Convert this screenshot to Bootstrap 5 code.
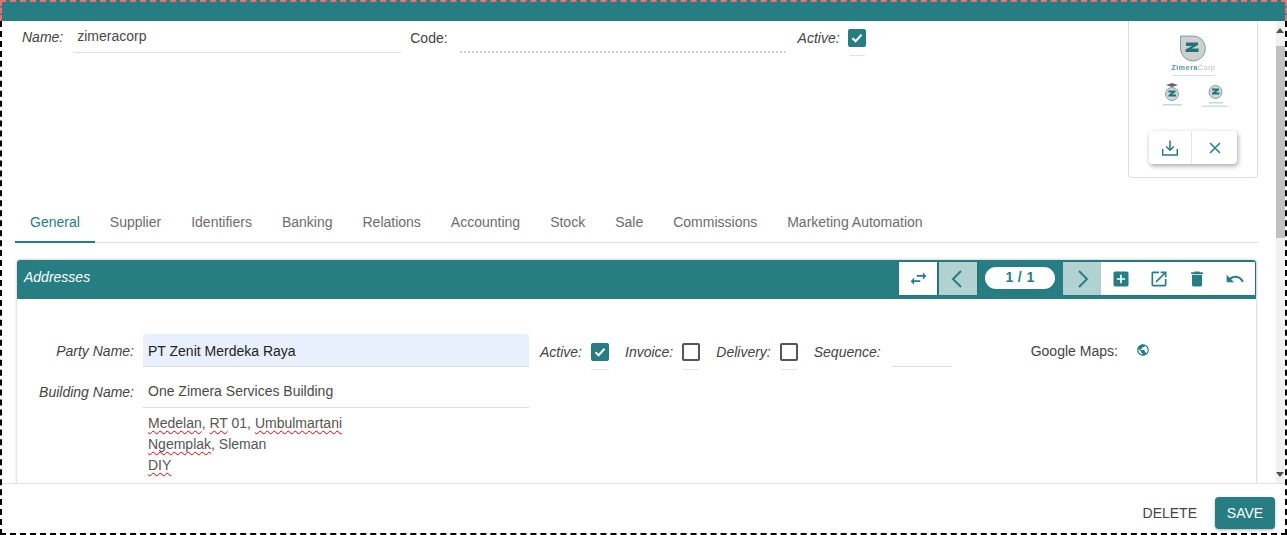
<!DOCTYPE html>
<html lang="en">
<head>
<meta charset="utf-8">
<title>Company</title>
<link href="https://cdn.jsdelivr.net/npm/bootstrap@5.3.0/dist/css/bootstrap.min.css" rel="stylesheet">
<style>
html,body{height:100%;overflow:hidden;background:#fff}
body{font-family:"Liberation Sans",Arial,sans-serif;font-size:14px;line-height:21px;color:#4a4a4a}
.shell{height:535px;width:1287px}
.topbar{height:21px;background:#267e82;border:2px dashed #e57373;border-bottom:0;flex:none}
.framebox{flex:1;min-height:0;border:2px dashed #000;border-top:0}
.midzone{flex:1;min-height:0}
.scroller{flex:1;min-width:0;overflow:hidden}
.fakebar{width:9px;background:#f1f1f1;flex:none;padding-top:7px;padding-bottom:6px}
.bararrow{width:0;height:0;border-left:4.5px solid transparent;border-right:4.5px solid transparent}
.bararrow.up{border-bottom:5px solid #505050}
.bararrow.down{border-top:5px solid #505050}
.barthumb{height:192px;background:#c1c1c1;margin-top:13px}
.headrow{padding-left:20px;padding-right:18px;height:157px}
.lbl{font-style:italic;color:#444;white-space:nowrap}
.lbl-plain{color:#444;white-space:nowrap}
.lbl-name{line-height:33px;margin-right:9px}
.lbl-code{line-height:34px;margin-left:9px;margin-right:10px}
.lbl-active{line-height:34px;margin-left:11px;margin-right:8px}
.fieldline{height:32px;border-bottom:1px solid #ddd;padding:0 5px;line-height:30px;border-radius:0 0 3px 3px;flex:none}
.fieldline.dotted{border-bottom:2px dotted #ccc}
.w-name{width:329px}
.tickbox{width:18px;height:18px;border-radius:2px;border:2px solid #555;background:#fff;display:flex;align-items:center;justify-content:center}
.tickbox.on{background:#267e82;border-color:#267e82}
.tickwrap{width:18px;height:36px;padding-top:9px;border-bottom:1px solid #e3e3e3;border-radius:0 0 3px 3px}
.tickwrap.upper{height:35px;padding-top:8px}
.imgbox{width:130px;height:157px;border:1px solid #ddd;border-top:0;border-radius:0 0 4px 4px}
.logoline{width:75px;margin:14px auto 0;display:block;filter:blur(.25px)}
.imgbtns{width:88px;height:33px;border-radius:4px;box-shadow:1px 2px 5px rgba(0,0,0,.35);background:#fff;margin:8px auto 0}
.imgbtns span{display:flex;align-items:center;justify-content:center}
.imgbtns span:first-child{width:42px}
.imgbtns span+span{flex:1;border-left:1px solid #e6e6e6}
.tabstrip{margin:22px 18px 0 13px;border-bottom:1px solid #ddd;height:43px;flex-wrap:nowrap}
.tabstrip .nav-link{padding:12px 15px 9px;color:#6d6d6d;border:0;border-radius:0;height:43px}
.tabstrip .nav-link.active{color:#267e82;background:none;border-bottom:2px solid #267e82}
.addrcard{margin:17px 20px 0 15px;border:0;border-radius:3px 3px 0 0;box-shadow:0 0 3px rgba(0,0,0,.3)}
.addrhead{height:39px;background:#267e82;color:#fff;font-style:italic;padding:2px 1px 4px 7px;border-radius:3px 3px 0 0}
.addrtitle{line-height:30px}
.toolcell{width:38px;height:33px;background:#fff;display:flex;align-items:center;justify-content:center;box-shadow:1px 0 2px rgba(0,0,0,.14)}
.toolcell.shifted{padding-left:2px}
.toolcell.lastcell{width:40px}
.toolcell.tint{background:#b2d2d2;margin-left:2px;padding-right:2px}
.toolcell.tint.nxt{margin-left:0;padding-right:0;padding-left:2px}
.pagerzone{width:86px;height:33px;display:flex;align-items:center;justify-content:center;padding-bottom:2px}
.pagerpill{width:70px;height:22px;background:#fff;border-radius:11px;text-align:center;font-style:normal;font-weight:700;color:#267e82;line-height:20px;letter-spacing:.4px}
.addrbody{padding-top:35px;padding-bottom:40px}
.partywrap{padding-left:8px}
.rowlbl{width:109px;text-align:right;margin-right:9px;line-height:35px}
.rowlbl.second{line-height:33px}
.wide{width:386px;padding:0 5px;height:33px;line-height:35px;border-bottom:1px solid #ddd}
.wide.hl{background:#e8f0fe;color:#222;border-radius:0}
.wide.second{height:32px;line-height:30px}
.spaced{margin-top:6px}
.checkzone{margin-left:11px;line-height:36px;height:36px}
.m-act{margin-right:9px}
.m-inv{margin-left:16px;margin-right:9px}
.m-del{margin-left:16px;margin-right:9px}
.m-seq{margin-left:16px;margin-right:10px}
.m-map{margin-left:79px;margin-right:18px;line-height:34px}
.globe{margin-top:9px}
.addrlines{padding-left:126px;margin-top:4px}
.addrlines div{padding-left:5px;color:#555}
.sp{text-decoration:underline wavy #e00;text-decoration-thickness:1px;text-underline-offset:2px;text-decoration-skip-ink:none}
.seqline{width:61px;height:33px;border-bottom:1px solid #ddd}
.footbar{height:50px;border-top:1px solid #e2e2e2;padding-right:10px;padding-top:13px}
.delbtn{color:#444;padding:0;border:0;background:none;font-size:14px;text-transform:uppercase;margin-right:18px;line-height:33px}
.savebtn{width:60px;height:32px;background:#267e82;color:#fff;border:0;border-radius:4px;font-size:14px;padding:0;box-shadow:0 1px 3px rgba(0,0,0,.3)}
.savebtn:hover{background:#267e82;color:#fff}
.g-teal{fill:#267e82}
.logo-word{font-size:7px;letter-spacing:.6px;fill:#4f9497;font-weight:700}
.logo-word tspan{fill:#b5b5b5;font-weight:400}
</style>
</head>
<body>
<div class="shell d-flex flex-column">
  <div class="topbar"></div>
  <div class="framebox d-flex flex-column">
    <div class="midzone d-flex">
      <div class="scroller">
        <div class="headrow d-flex">
          <div class="lbl lbl-name">Name:</div>
          <div class="fieldline w-name">zimeracorp</div>
          <div class="lbl-plain lbl-code">Code:</div>
          <div class="fieldline w-name dotted"></div>
          <div class="lbl lbl-active">Active:</div>
          <div class="tickwrap upper">
            <div class="tickbox on"><svg width="14" height="14" viewBox="0 0 14 14"><path d="M2.500 7.200 5.600 10.200 11.500 3.800" fill="none" stroke="#fff" stroke-width="2"/></svg></div>
          </div>
          <div class="imgbox ms-auto d-flex flex-column">
            <svg class="logoline" height="88" viewBox="0 0 75 88">
              <path d="M24.500 1h11.500a12.500 12.500 0 1 1-11.500 13z" fill="#cfcfcf" stroke="#267e82" stroke-width=".6"/>
              <path d="M30 7.500h12v2.500l-6.500 3.500h7v3.500h-13v-2.500l6.500-3.500h-6z" fill="#1f7478"/>
              <text class="logo-word" x="37.500" y="35" text-anchor="middle">Zimera<tspan>Corp</tspan></text>
              <rect x="16" y="40" width="43" height="1" fill="#cfe5e5"/>
              <path d="M10 50l6-2 6 2-6 2z" fill="#666"/>
              <circle cx="16" cy="59" r="6.500" fill="#d5d5d5" stroke="#267e82" stroke-width=".6"/>
              <path d="M12.500 55.500h7v1.500l-3.500 2.500h4v2h-7.500v-1.500l3.500-2.500h-3.500z" fill="#1f7478"/>
              <rect x="7" y="69" width="19" height="1.500" fill="#c5d8d8"/>
              <circle cx="59.500" cy="57" r="6.500" fill="#d5d5d5" stroke="#267e82" stroke-width=".6"/>
              <path d="M56 53.500h7v1.500l-3.500 2.500h4v2H56V58l3.500-2.500H56z" fill="#1f7478"/>
              <rect x="53" y="67" width="14" height="1.500" fill="#c5d8d8"/>
              <rect x="46" y="70.500" width="26" height="1.500" fill="#d0e0e0"/>
            </svg>
            <div class="imgbtns d-flex">
              <span><svg width="18" height="18" viewBox="0 0 18 18" fill="none" stroke="#267e82" stroke-width="1.500"><path d="M9 1.500v9.500M5.200 7.500 9 11.300l3.800-3.800M1.700 10v6h14.600v-6"/></svg></span>
              <span><svg width="14" height="14" viewBox="0 0 14 14" fill="none" stroke="#267e82" stroke-width="1.500"><path d="M2 2 12 12M12 2 2 12"/></svg></span>
            </div>
          </div>
        </div>
        <ul class="nav tabstrip">
          <li class="nav-item"><a class="nav-link active" href="#">General</a></li>
          <li class="nav-item"><a class="nav-link" href="#">Supplier</a></li>
          <li class="nav-item"><a class="nav-link" href="#">Identifiers</a></li>
          <li class="nav-item"><a class="nav-link" href="#">Banking</a></li>
          <li class="nav-item"><a class="nav-link" href="#">Relations</a></li>
          <li class="nav-item"><a class="nav-link" href="#">Accounting</a></li>
          <li class="nav-item"><a class="nav-link" href="#">Stock</a></li>
          <li class="nav-item"><a class="nav-link" href="#">Sale</a></li>
          <li class="nav-item"><a class="nav-link" href="#">Commissions</a></li>
          <li class="nav-item"><a class="nav-link" href="#">Marketing Automation</a></li>
        </ul>
        <div class="card addrcard">
          <div class="addrhead d-flex align-items-start justify-content-between">
            <span class="addrtitle">Addresses</span>
            <div class="d-flex">
              <div class="toolcell"><svg width="21" height="21" viewBox="0 0 24 24" class="g-teal"><path d="M6.990 11 3 15l3.990 4v-3H14v-2H6.990zM21 9l-3.990-4v3H10v2h7.010v3z"/></svg></div>
              <div class="toolcell tint"><svg width="16" height="20" viewBox="0 0 16 20" fill="none" stroke="#267e82" stroke-width="2"><path d="M12 2 4 10l8 8"/></svg></div>
              <div class="pagerzone"><div class="pagerpill">1 / 1</div></div>
              <div class="toolcell tint nxt"><svg width="16" height="20" viewBox="0 0 16 20" fill="none" stroke="#267e82" stroke-width="2"><path d="m4 2 8 8-8 8"/></svg></div>
              <div class="toolcell shifted"><svg width="20" height="20" viewBox="0 0 24 24" class="g-teal"><path d="M19 3H5c-1.110 0-2 .9-2 2v14c0 1.100.89 2 2 2h14c1.100 0 2-.9 2-2V5c0-1.100-.9-2-2-2zm-2 10h-4v4h-2v-4H7v-2h4V7h2v4h4v2z"/></svg></div>
              <div class="toolcell shifted"><svg width="20" height="20" viewBox="0 0 24 24" class="g-teal"><path d="M19 19H5V5h7V3H5c-1.110 0-2 .9-2 2v14c0 1.100.89 2 2 2h14c1.100 0 2-.9 2-2v-7h-2v7zM14 3v2h3.590l-9.830 9.830 1.410 1.410L19 6.410V10h2V3h-7z"/></svg></div>
              <div class="toolcell shifted"><svg width="20" height="20" viewBox="0 0 24 24" class="g-teal"><path d="M6 19c0 1.100.9 2 2 2h8c1.100 0 2-.9 2-2V7H6v12zM19 4h-3.500l-1-1h-5l-1 1H5v2h14V4z"/></svg></div>
              <div class="toolcell lastcell"><svg width="20" height="20" viewBox="0 0 24 24" class="g-teal"><path d="M12.500 8c-2.650 0-5.050.99-6.900 2.600L2 7v9h9l-3.620-3.620c1.390-1.160 3.160-1.880 5.120-1.880 3.540 0 6.550 2.310 7.600 5.500l2.370-.78C21.080 11.030 17.150 8 12.500 8z"/></svg></div>
            </div>
          </div>
          <div class="addrbody">
            <div class="d-flex partywrap">
              <div class="rowlbl lbl">Party Name:</div>
              <div class="wide hl">PT Zenit Merdeka Raya</div>
              <div class="d-flex checkzone">
                <span class="lbl m-act">Active:</span>
                <div class="tickwrap"><div class="tickbox on"><svg width="14" height="14" viewBox="0 0 14 14"><path d="M2.500 7.200 5.600 10.200 11.500 3.800" fill="none" stroke="#fff" stroke-width="2"/></svg></div></div>
                <span class="lbl m-inv">Invoice:</span>
                <div class="tickwrap"><div class="tickbox"></div></div>
                <span class="lbl m-del">Delivery:</span>
                <div class="tickwrap"><div class="tickbox"></div></div>
                <span class="lbl m-seq">Sequence:</span>
                <div class="seqline"></div>
                <span class="lbl-plain m-map">Google Maps:</span>
                <svg width="14" height="14" viewBox="0 0 24 24" class="g-teal globe"><path d="M12 2C6.480 2 2 6.480 2 12s4.480 10 10 10 10-4.480 10-10S17.520 2 12 2zm-1 17.930c-3.950-.49-7-3.850-7-7.930 0-.62.08-1.210.21-1.790L9 15v1c0 1.100.9 2 2 2v1.930zm6.900-2.540c-.26-.81-1-1.390-1.900-1.390h-1v-3c0-.55-.45-1-1-1H8v-2h2c.55 0 1-.45 1-1V7h2c1.100 0 2-.9 2-2v-.41c2.930 1.190 5 4.060 5 7.410 0 2.080-.8 3.970-2.100 5.390z"/></svg>
              </div>
            </div>
            <div class="d-flex partywrap spaced">
              <div class="rowlbl lbl second">Building Name:</div>
              <div class="wide second">One Zimera Services Building</div>
            </div>
            <div class="addrlines">
              <div><span class="sp">Medelan</span>, <span class="sp">RT</span> 01, <span class="sp">Umbulmartani</span></div>
              <div><span class="sp">Ngemplak</span>, Sleman</div>
              <div><span class="sp">DIY</span></div>
            </div>
          </div>
        </div>
      </div>
      <div class="fakebar d-flex flex-column">
        <div class="bararrow up"></div>
        <div class="barthumb"></div>
        <div class="bararrow down mt-auto"></div>
      </div>
    </div>
    <div class="footbar d-flex justify-content-end align-items-start">
      <button class="delbtn">Delete</button>
      <button class="btn savebtn">SAVE</button>
    </div>
  </div>
</div>
</body>
</html>
